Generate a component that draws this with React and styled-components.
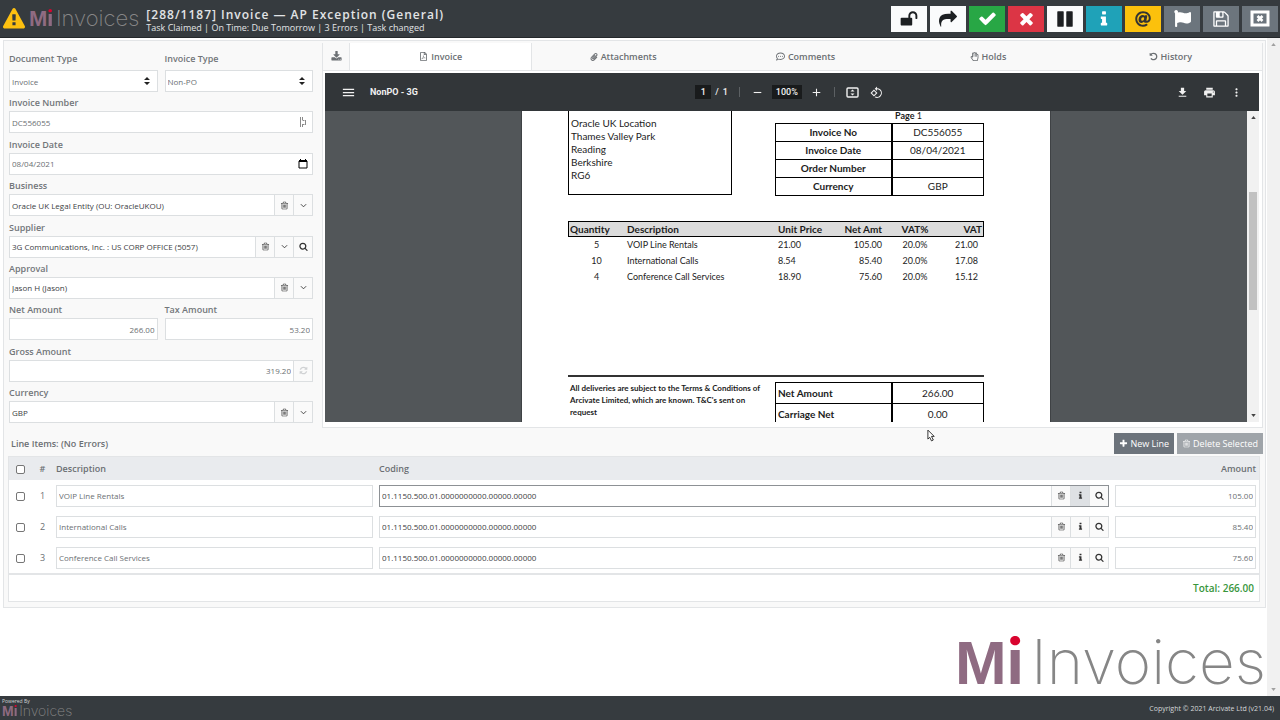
import styled, { createGlobalStyle, css } from "styled-components";
import { FaAt, FaPaperclip, FaRegFilePdf, FaRegHandPaper, FaRegCommentDots, FaFlag } from "react-icons/fa";
import { MdMenu, MdRemove, MdAdd, MdFileDownload, MdPrint, MdMoreVert, MdRotate90DegreesCcw } from "react-icons/md";

const icons = {
  unlock: "M1728 576v256q0 26-19 45t-45 19h-64q-26 0-45-19t-19-45v-256q0-106-75-181t-181-75-181 75-75 181v192h96q40 0 68 28t28 68v576q0 40-28 68t-68 28h-960q-40 0-68-28t-28-68v-576q0-40 28-68t68-28h672v-192q0-185 131.500-316.500t316.500-131.500 316.500 131.500 131.500 316.500z",
  share: "M1792 640q0 26-19 45l-512 512q-19 19-45 19t-45-19-19-45v-256h-224q-98 0-175.500 6t-154 21.500-133 42.500-105.500 69.500-80 101-48.500 138.500-17.500 181q0 55 5 123 0 6 2.500 23.500t2.500 26.500q0 15-8.500 25t-23.500 10q-16 0-28-17-7-9-13-22t-13.500-30-10.500-24q-127-285-127-451 0-199 53-333 162-403 875-403h224v-256q0-26 19-45t45-19 45 19l512 512q19 19 19 45z",
  check: "M1671 566q0 40-28 68l-724 724-136 136q-28 28-68 28t-68-28l-136-136-362-362q-28-28-28-68t28-68l136-136q28-28 68-28t68 28l294 295 656-657q28-28 68-28t68 28l136 136q28 28 28 68z",
  times: "M1490 1322q0 40-28 68l-136 136q-28 28-68 28t-68-28l-294-294-294 294q-28 28-68 28t-68-28l-136-136q-28-28-28-68t28-68l294-294-294-294q-28-28-28-68t28-68l136-136q28-28 68-28t68 28l294 294 294-294q28-28 68-28t68 28l136 136q28 28 28 68t-28 68l-294 294 294 294q28 28 28 68z",
  pause: "M1664 192v1408q0 26-19 45t-45 19h-512q-26 0-45-19t-19-45v-1408q0-26 19-45t45-19h512q26 0 45 19t19 45zm-896 0v1408q0 26-19 45t-45 19h-512q-26 0-45-19t-19-45v-1408q0-26 19-45t45-19h512q26 0 45 19t19 45z",
  info: "M1216 1344v128q0 26-19 45t-45 19h-512q-26 0-45-19t-19-45v-128q0-26 19-45t45-19h64v-384h-64q-26 0-45-19t-19-45v-128q0-26 19-45t45-19h384q26 0 45 19t19 45v576h64q26 0 45 19t19 45zm-128-1152v192q0 26-19 45t-45 19h-256q-26 0-45-19t-19-45v-192q0-26 19-45t45-19h256q26 0 45 19t19 45z",
  save: "M512 1536h768v-384h-768v384zm896 0h128v-896q0-14-10-38.500t-20-34.500l-281-281q-10-10-34-20t-39-10v416q0 40-28 68t-68 28h-576q-40 0-68-28t-28-68v-416h-128v1280h128v-416q0-40 28-68t68-28h832q40 0 68 28t28 68v416zm-384-928v-320q0-13-9.500-22.500t-22.500-9.500h-192q-13 0-22.500 9.500t-9.500 22.500v320q0 13 9.500 22.500t22.500 9.500h192q13 0 22.500-9.500t9.500-22.500zm640 32v928q0 40-28 68t-68 28h-1344q-40 0-68-28t-28-68v-1344q0-40 28-68t68-28h928q40 0 88 20t76 48l280 280q28 28 48 76t20 88z",
  warning: "M1024 1375v-190q0-14-9.500-23.500t-22.500-9.500h-192q-13 0-22.500 9.500t-9.500 23.500v190q0 14 9.500 23.500t22.500 9.500h192q13 0 22.500-9.500t9.500-23.500zm-2-374l18-459q0-12-10-19-13-11-24-11h-220q-11 0-24 11-10 7-10 21l17 457q0 10 10 16.500t24 6.500h185q14 0 23.500-6.500t10.500-16.500zm-14-934l768 1408q35 63-2 126-17 29-46.500 46t-63.500 17h-1536q-34 0-63.500-17t-46.500-46q-37-63-2-126l768-1408q17-31 47-49t65-18 65 18 47 49z",
  trash: "M704 736v576q0 14-9 23t-23 9h-64q-14 0-23-9t-9-23v-576q0-14 9-23t23-9h64q14 0 23 9t9 23zm256 0v576q0 14-9 23t-23 9h-64q-14 0-23-9t-9-23v-576q0-14 9-23t23-9h64q14 0 23 9t9 23zm256 0v576q0 14-9 23t-23 9h-64q-14 0-23-9t-9-23v-576q0-14 9-23t23-9h64q14 0 23 9t9 23zm128 724v-948h-896v948q0 22 7 40.500t14.500 27 10.500 8.500h832q3 0 10.500-8.500t14.500-27 7-40.500zm-672-1076h448l-48-117q-7-9-17-11h-317q-10 2-17 11zm928 32v64q0 14-9 23t-23 9h-96v948q0 83-47 143.500t-113 60.500h-832q-66 0-113-58.500t-47-141.500v-952h-96q-14 0-23-9t-9-23v-64q0-14 9-23t23-9h309l70-167q15-37 54-63t79-26h320q40 0 79 26t54 63l70 167h309q14 0 23 9t9 23z",
  search: "M1216 832q0-185-131.500-316.500t-316.500-131.500-316.500 131.500-131.500 316.500 131.500 316.500 316.500 131.500 316.500-131.500 131.500-316.500zm512 832q0 52-38 90t-90 38q-54 0-90-38l-343-342q-179 124-399 124-143 0-273.500-55.500t-225-150-150-225-55.500-273.500 55.500-273.500 150-225 225-150 273.500-55.500 273.500 55.500 225 150 150 225 55.500 273.500q0 220-124 399l343 343q37 37 37 90z",
  plus: "M1600 736v192q0 40-28 68t-68 28h-416v416q0 40-28 68t-68 28h-192q-40 0-68-28t-28-68v-416h-416q-40 0-68-28t-28-68v-192q0-40 28-68t68-28h416v-416q0-40 28-68t68-28h192q40 0 68 28t28 68v416h416q40 0 68 28t28 68z",
  download: "M1344 1344q0-26-19-45t-45-19-45 19-19 45 19 45 45 19 45-19 19-45zm256 0q0-26-19-45t-45-19-45 19-19 45 19 45 45 19 45-19 19-45zm128-224v320q0 40-28 68t-68 28h-1472q-40 0-68-28t-28-68v-320q0-40 28-68t68-28h465l135 136q58 56 136 56t136-56l136-136h464q40 0 68 28t28 68zm-325-569q17 41-14 70l-448 448q-18 19-45 19t-45-19l-448-448q-31-29-14-70 17-39 59-39h256v-448q0-26 19-45t45-19h256q26 0 45 19t19 45v448h256q42 0 59 39z",
  refresh: "M1639 1056q0 5-1 7-64 268-268 434.500t-478 166.500q-146 0-282.500-55t-243.500-157l-129 129q-19 19-45 19t-45-19-19-45v-448q0-26 19-45t45-19h448q26 0 45 19t19 45-19 45l-137 137q71 66 161 102t187 36q134 0 250-65t186-179q11-17 53-117 8-23 30-23h192q13 0 22.500 9.500t9.500 22.500zm25-800v448q0 26-19 45t-45 19h-448q-26 0-45-19t-19-45 19-45l138-138q-148-137-349-137-134 0-250 65t-186 179q-11 17-53 117-8 23-30 23h-199q-13 0-22.500-9.500t-9.500-22.500v-7q65-268 270-434.500t480-166.500q146 0 284 55.500t245 156.500l130-129q19-19 45-19t45 19 19 45z",
  history: "M1664 896q0 156-61 298t-164 245-245 164-298 61q-172 0-327-72.500t-264-204.500q-7-10-6.500-22.500t8.500-20.500l137-138q10-9 25-9 16 2 23 12 73 95 179 147t225 52q104 0 198.500-40.500t163.500-109.500 109.500-163.500 40.500-198.500-40.500-198.500-109.500-163.500-163.500-109.500-198.500-40.500q-98 0-188 35.500t-160 101.500l137 138q31 30 14 69-17 40-59 40h-448q-26 0-45-19t-19-45v-448q0-42 40-59 39-17 69 14l130 129q107-101 244.500-156.500t284.500-55.500q156 0 298 61t245 164 164 245 61 298z",
};

const Fa = ({ name, size = 10 }) => (
  <svg width={size} height={size} viewBox="0 0 1792 1792" fill="currentColor" aria-hidden="true">
    <path d={icons[name]} />
  </svg>
);

const Chevron = () => (
  <svg width="7" height="7" viewBox="0 0 8 8" fill="none" stroke="currentColor" aria-hidden="true">
    <path d="M1 2.500l3 3 3-3" />
  </svg>
);

const WindowClose = () => (
  <svg width="20" height="18" viewBox="0 0 20 18" aria-hidden="true">
    <rect x="2" y="2" width="16" height="13" fill="none" stroke="currentColor" strokeWidth="3" />
    <path d="M7.500 6l5 5M12.500 6l-5 5" stroke="currentColor" strokeWidth="2.600" />
  </svg>
);

const FitPage = () => (
  <svg width="13" height="11" viewBox="0 0 13 11" aria-hidden="true">
    <rect x="1" y="1" width="11" height="9" rx="1" fill="none" stroke="currentColor" strokeWidth="1.400" />
    <path d="M6.500 2.500l2 2h-4zM6.500 8.500l2-2h-4z" fill="currentColor" />
  </svg>
);

const Calendar = () => (
  <svg width="10" height="10" viewBox="0 0 10 10" aria-hidden="true">
    <path d="M1 2h8v7H1z" fill="none" stroke="#000" />
    <path d="M1 1h8v2H1zM2 0h1v1H2zM7 0h1v1H7z" fill="#000" />
  </svg>
);

const Scan = () => (
  <svg width="8" height="10" viewBox="0 0 8 10" fill="none" stroke="#8a8a8a" aria-hidden="true">
    <path d="M1.500 0v10M3.500 0v3M3.500 7v3M3.500 3.500h2M3.500 7.500h2M6.500 3v5" />
  </svg>
);

const Brand = ({ size }) => (
  <Wordmark $size={size}>
    <b>M<i>i</i></b><span>Invoices</span>
  </Wordmark>
);

const actions = [
  { label: "Unlock", tone: "light", icon: <Fa name="unlock" size={18} /> },
  { label: "Forward", tone: "light", icon: <Fa name="share" size={18} /> },
  { label: "Approve", tone: "green", icon: <Fa name="check" size={19} /> },
  { label: "Reject", tone: "red", icon: <Fa name="times" size={19} /> },
  { label: "Pause", tone: "light", icon: <Fa name="pause" size={18} /> },
  { label: "Information", tone: "teal", icon: <Fa name="info" size={18} /> },
  { label: "Email", tone: "yellow", icon: <FaAt size={16} /> },
  { label: "Flag", tone: "grey", icon: <FaFlag size={17} /> },
  { label: "Save", tone: "grey", icon: <Fa name="save" size={18} /> },
  { label: "Close", tone: "grey", icon: <WindowClose /> },
];

const tabs = [
  { name: "Invoice", icon: <FaRegFilePdf size={9} />, active: true },
  { name: "Attachments", icon: <FaPaperclip size={8} /> },
  { name: "Comments", icon: <FaRegCommentDots size={9} /> },
  { name: "Holds", icon: <FaRegHandPaper size={9} /> },
  { name: "History", icon: <Fa name="history" size={9} /> },
];

const lines = [
  { qty: "5", description: "VOIP Line Rentals", price: "21.00", net: "105.00", vat: "21.00", focus: true },
  { qty: "10", description: "International Calls", price: "8.54", net: "85.40", vat: "17.08" },
  { qty: "4", description: "Conference Call Services", price: "18.90", net: "75.60", vat: "15.12" },
];

const coding = "01.1150.500.01.0000000000.00000.00000";

const SelectField = ({ id, label, value }) => (
  <Field>
    <label htmlFor={id}>{label}</label>
    <SelectBox>
      <select id={id} defaultValue={value}>
        <option>{value}</option>
      </select>
      <svg width="6" height="8" viewBox="0 0 6 8" aria-hidden="true">
        <path d="M3 0l3 3H0zM3 8l3-3H0z" fill="#222" />
      </svg>
    </SelectBox>
  </Field>
);

const TextField = ({ id, label, value, right, dark, children }) => (
  <Field>
    <label htmlFor={id}>{label}</label>
    <Group $right={right} $dark={dark}>
      <input id={id} defaultValue={value} />
      {children}
    </Group>
  </Field>
);

const Lookup = ({ search, ...props }) => (
  <TextField dark {...props}>
    <AddOn aria-label={`Clear ${props.label}`}><Fa name="trash" size={9} /></AddOn>
    <AddOn aria-label={`Choose ${props.label}`}><Chevron /></AddOn>
    {search && <AddOn aria-label={`Search ${props.label}`}><Fa name="search" size={9} /></AddOn>}
  </TextField>
);

const InvoiceForm = () => (
  <Form>
    <Pair>
      <SelectField id="doc-type" label="Document Type" value="Invoice" />
      <SelectField id="inv-type" label="Invoice Type" value="Non-PO" />
    </Pair>
    <TextField id="inv-no" label="Invoice Number" value="DC556055">
      <Inner><Scan /></Inner>
    </TextField>
    <TextField id="inv-date" label="Invoice Date" value="08/04/2021">
      <Inner as="button" type="button" aria-label="Pick a date"><Calendar /></Inner>
    </TextField>
    <Lookup id="business" label="Business" value="Oracle UK Legal Entity (OU: OracleUKOU)" />
    <Lookup id="supplier" label="Supplier" value="3G Communications, Inc. : US CORP OFFICE (5057)" search />
    <Lookup id="approval" label="Approval" value="Jason H (Jason)" />
    <Pair>
      <TextField id="net" label="Net Amount" value="266.00" right />
      <TextField id="tax" label="Tax Amount" value="53.20" right />
    </Pair>
    <TextField id="gross" label="Gross Amount" value="319.20" right>
      <AddOn $faint aria-label="Recalculate"><Fa name="refresh" size={9} /></AddOn>
    </TextField>
    <Lookup id="currency" label="Currency" value="GBP" />
  </Form>
);

const PdfPage = () => (
  <Paper>
    <PaperTop>
      <Address>
        Oracle UK Location<br />Thames Valley Park<br />Reading<br />Berkshire<br />RG6
      </Address>
      <div>
        <PageNo><b>Page</b> 1</PageNo>
        <Boxed $row={18}>
          <tbody>
            <tr><th>Invoice No</th><td>DC556055</td></tr>
            <tr><th>Invoice Date</th><td>08/04/2021</td></tr>
            <tr><th>Order Number</th><td></td></tr>
            <tr><th>Currency</th><td>GBP</td></tr>
          </tbody>
        </Boxed>
      </div>
    </PaperTop>
    <PaperLines>
      <thead>
        <tr>
          <th>Quantity</th><th>Description</th><th>Unit Price</th><th>Net Amt</th><th>VAT%</th><th>VAT</th>
        </tr>
      </thead>
      <tbody>
        {lines.map(line => (
          <tr key={line.description}>
            <td>{line.qty}</td>
            <td>{line.description}</td>
            <td>{line.price}</td>
            <td>{line.net}</td>
            <td>20.0%</td>
            <td>{line.vat}</td>
          </tr>
        ))}
      </tbody>
    </PaperLines>
    <PaperBottom>
      <Terms>
        All deliveries are subject to the Terms &amp; Conditions of Arcivate Limited, which are known. T&amp;C's sent on request
      </Terms>
      <Boxed $row={21} $left>
        <tbody>
          <tr><th>Net Amount</th><td>266.00</td></tr>
          <tr><th>Carriage Net</th><td>0.00</td></tr>
        </tbody>
      </Boxed>
    </PaperBottom>
  </Paper>
);

const Viewer = () => (
  <ViewerFrame>
    <PdfBar>
      <PdfSide>
        <PdfButton aria-label="Menu"><MdMenu size={15} /></PdfButton>
        <strong>NonPO - 3G</strong>
      </PdfSide>
      <PdfCenter>
        <PageCount>
          <input aria-label="Page" defaultValue="1" />
          <span>/</span>
          <span>1</span>
        </PageCount>
        <hr />
        <PdfButton aria-label="Zoom out"><MdRemove size={13} /></PdfButton>
        <input className="zoom" aria-label="Zoom" defaultValue="100%" />
        <PdfButton aria-label="Zoom in"><MdAdd size={13} /></PdfButton>
        <hr />
        <PdfButton aria-label="Fit to page"><FitPage /></PdfButton>
        <PdfButton aria-label="Rotate"><MdRotate90DegreesCcw size={13} /></PdfButton>
      </PdfCenter>
      <PdfSide $end>
        <PdfButton aria-label="Download"><MdFileDownload size={13} /></PdfButton>
        <PdfButton aria-label="Print"><MdPrint size={13} /></PdfButton>
        <PdfButton aria-label="More"><MdMoreVert size={13} /></PdfButton>
      </PdfSide>
    </PdfBar>
    <PdfCanvas>
      <PdfDesk><PdfPage /></PdfDesk>
      <Scroller $thumb />
    </PdfCanvas>
  </ViewerFrame>
);

const LineItems = () => (
  <section>
    <LinesHead>
      <h2>Line Items: (No Errors)</h2>
      <SmallButton><Fa name="plus" size={9} /> New Line</SmallButton>
      <SmallButton $muted><Fa name="trash" size={9} /> Delete Selected</SmallButton>
    </LinesHead>
    <Lines>
      <colgroup>
        <col className="check" /><col className="number" /><col className="description" /><col /><col className="amount" />
      </colgroup>
      <thead>
        <tr>
          <th><Tick type="checkbox" aria-label="Select all lines" /></th>
          <th>#</th>
          <th>Description</th>
          <th>Coding</th>
          <th>Amount</th>
        </tr>
      </thead>
      <tbody>
        {lines.map((line, i) => (
          <tr key={line.description}>
            <td><Tick type="checkbox" aria-label={`Select line ${i + 1}`} /></td>
            <td>{i + 1}</td>
            <td><Group><input aria-label="Description" defaultValue={line.description} /></Group></td>
            <td>
              <Group $dark $focus={line.focus}>
                <input aria-label="Coding" defaultValue={coding} />
                <AddOn aria-label="Clear coding"><Fa name="trash" size={9} /></AddOn>
                <AddOn $on={line.focus} aria-label="Coding information"><Fa name="info" size={9} /></AddOn>
                <AddOn aria-label="Search coding"><Fa name="search" size={9} /></AddOn>
              </Group>
            </td>
            <td><Group $right><input aria-label="Amount" defaultValue={line.net} /></Group></td>
          </tr>
        ))}
      </tbody>
      <tfoot>
        <tr><td colSpan="5">Total: 266.00</td></tr>
      </tfoot>
    </Lines>
  </section>
);

const Scroller = ({ $thumb }) => (
  <Track $thumb={$thumb}>
    <svg width="5" height="3" viewBox="0 0 6 4"><path d="M3 0l3 4H0z" fill="currentColor" /></svg>
    {$thumb && <i />}
    <svg width="5" height="3" viewBox="0 0 6 4"><path d="M3 4l3-4H0z" fill="currentColor" /></svg>
  </Track>
);

const App = () => (
  <>
    <GlobalStyle />
    <Page>
      <Header>
        <Warn><Fa name="warning" size={22} /></Warn>
        <Brand size={22} />
        <Heading>
          <h1>[288/1187] Invoice — AP Exception (General)</h1>
          <p>Task Claimed | On Time: Due Tomorrow | 3 Errors | Task changed</p>
        </Heading>
        <Actions>
          {actions.map(action => (
            <Action key={action.label} $tone={action.tone} aria-label={action.label}>{action.icon}</Action>
          ))}
        </Actions>
      </Header>
      <Body>
        <Main>
          <Panel>
            <Columns>
              <InvoiceForm />
              <Preview>
                <Tabs>
                  <DownloadTab aria-label="Download"><Fa name="download" size={11} /></DownloadTab>
                  {tabs.map(tab => (
                    <Tab key={tab.name} $active={tab.active}>{tab.icon} {tab.name}</Tab>
                  ))}
                </Tabs>
                <Viewer />
              </Preview>
            </Columns>
            <LineItems />
          </Panel>
          <BigLogo><Brand size={62} /></BigLogo>
        </Main>
        <Scroller />
      </Body>
      <Footer>
        <div>
          <small>Powered By</small>
          <Brand size={14} />
        </div>
        <p>Copyright © 2021 Arcivate Ltd (v21.04)</p>
      </Footer>
      <Pointer viewBox="0 0 10 14" aria-hidden="true">
        <path d="M1 1v10l2-2 2 4 2-1-2-4h3z" fill="#fff" stroke="#222" />
      </Pointer>
    </Page>
  </>
);

export default App;

const tones = {
  light: ["#fafbfc", "#1c1f22"],
  green: ["#28a745", "#fff"],
  red: ["#dc3545", "#fff"],
  teal: ["#1fa2b8", "#fff"],
  yellow: ["#fcc10c", "#333"],
  grey: ["#6c757d", "#fff"],
};

const GlobalStyle = createGlobalStyle`
  *{
    box-sizing: border-box;
  }
  body{
    margin: 0;
    background-color: #fff;
    color: #6b6f73;
    font-family: "Open Sans", "Noto Sans", sans-serif;
    font-size: 9px;
  }
  h1, h2, p{
    margin: 0;
  }
  button, input, select{
    font: inherit;
    color: inherit;
    margin: 0;
  }
  button{
    padding: 0;
    border: none;
    background: none;
    cursor: pointer;
  }
  svg{
    flex: none;
  }
`;

const Page = styled.div`
  min-height: 100vh;
  display: flex;
  flex-direction: column;
`;

const Header = styled.header`
  height: 38px;
  display: flex;
  align-items: center;
  padding: 0 2px 0 3px;
  background-color: #363b3f;
  border-bottom: 1px solid #24282b;
  color: #e2e4e6;
`;

const Warn = styled.span`
  display: flex;
  margin-right: 4px;
  color: #fdc010;
`;

const Wordmark = styled.span`
  font-family: Inter, sans-serif;
  font-size: ${({ $size }) => $size}px;
  line-height: 1;
  font-weight: 200;
  color: #868686;
  white-space: nowrap;
  b{
    margin-right: 0.12em;
    font-family: "Liberation Sans", sans-serif;
    font-weight: 700;
    color: #8f6b82;
  }
  /* red dot over a plum stem */
  i{
    font-family: Inter, sans-serif;
    font-style: normal;
    color: transparent;
    background: linear-gradient(#d9042f 33%, #8f6b82 33%);
    background-clip: text;
  }
`;

const Heading = styled.div`
  flex: 1;
  margin-left: 7px;
  padding-top: 4px;
  h1{
    font-size: 12px;
    line-height: 14px;
    font-weight: 600;
    letter-spacing: 1px;
  }
  p{
    font-size: 9px;
    line-height: 12px;
    font-weight: 500;
  }
`;

const Actions = styled.div`
  display: flex;
  gap: 3px;
`;

const Action = styled.button`
  width: 36px;
  height: 26px;
  display: flex;
  align-items: center;
  justify-content: center;
  background-color: ${({ $tone }) => tones[$tone][0]};
  color: ${({ $tone }) => tones[$tone][1]};
`;

const Body = styled.div`
  flex: 1;
  display: flex;
`;

const Main = styled.main`
  flex: 1;
  min-width: 0;
  display: flex;
  flex-direction: column;
  padding: 2px 1px 0 3px;
`;

const Track = styled.div`
  width: ${({ $thumb }) => ($thumb ? 12 : 13)}px;
  display: flex;
  flex-direction: column;
  align-items: center;
  justify-content: space-between;
  padding: 5px 0;
  background-color: #f1f1f1;
  color: ${({ $thumb }) => ($thumb ? "#444" : "#a0a0a0")};
  i{
    width: 8px;
    height: 118px;
    margin-bottom: 32px;
    background-color: #c1c1c1;
  }
`;

const Panel = styled.div`
  padding: 2px 2px 5px 4px;
  background-color: #f9f9f9;
  border: 1px solid #e3e5e7;
`;

const Columns = styled.div`
  display: flex;
`;

const Form = styled.form`
  flex: 0 0 304px;
  display: flex;
  flex-direction: column;
  justify-content: space-between;
  margin: 5px 9px 5px 1px;
`;

const Pair = styled.div`
  display: grid;
  grid-template-columns: 1fr 1fr;
  gap: 7px;
`;

const Field = styled.div`
  label{
    display: block;
    line-height: 17px;
    font-weight: 600;
    color: #727679;
  }
  ${Pair}:first-child & label{
    line-height: 22px;
  }
`;

const inputText = css`
  width: 100%;
  min-width: 0;
  height: 100%;
  padding: 0 2px;
  border: none;
  outline: none;
  background-color: transparent;
  font-size: 8px;
`;

const SelectBox = styled.div`
  position: relative;
  height: 22px;
  background-color: #fff;
  border: 1px solid #dcdfe1;
  select{
    ${inputText}
    appearance: none;
  }
  svg{
    position: absolute;
    top: 6px;
    right: 7px;
    pointer-events: none;
  }
`;

const Group = styled.div`
  height: 22px;
  display: flex;
  align-items: stretch;
  background-color: #fff;
  border: 1px solid ${({ $focus }) => ($focus ? "#8d9195" : "#dcdfe1")};
  color: ${({ $dark }) => ($dark ? "#3c4043" : "#6b6f73")};
  input{
    ${inputText}
    text-align: ${({ $right }) => ($right ? "right" : "left")};
  }
`;

const AddOn = styled.button.attrs({ type: "button" })`
  flex: 0 0 19px;
  display: flex;
  align-items: center;
  justify-content: center;
  border-left: 1px solid #dcdfe1;
  background-color: ${({ $on }) => ($on ? "#dee1e4" : "#fafafa")};
  color: ${({ $faint }) => ($faint ? "#d0d2d4" : "#333")};
`;

const Inner = styled.span`
  flex: 0 0 19px;
  display: flex;
  align-items: center;
  justify-content: center;
`;

const Preview = styled.div`
  flex: 1;
  min-width: 0;
  border: 1px solid #e3e5e7;
  border-top: none;
  background-color: #fff;
`;

const Tabs = styled.div`
  height: 28px;
  display: flex;
  background-color: #f9f9f9;
  border-bottom: 1px solid #e3e5e7;
`;

const Tab = styled.button`
  flex: 1;
  display: flex;
  align-items: center;
  justify-content: center;
  gap: 3px;
  font-weight: 600;
  background-color: ${({ $active }) => ($active ? "#fff" : "transparent")};
  border-right: 1px solid ${({ $active }) => ($active ? "#e3e5e7" : "transparent")};
`;

const DownloadTab = styled.button`
  width: 27px;
  display: flex;
  align-items: center;
  justify-content: center;
  border-right: 1px solid #e3e5e7;
`;

const ViewerFrame = styled.div`
  margin: 2px 3px 5px 2px;
`;

const PdfBar = styled.div`
  height: 38px;
  display: flex;
  align-items: center;
  padding: 0 16px;
  background-color: #323639;
  color: #f1f1f1;
  font-family: Roboto, sans-serif;
  font-size: 9px;
  font-weight: 500;
`;

const PdfSide = styled.div`
  flex: 1;
  display: flex;
  align-items: center;
  justify-content: ${({ $end }) => ($end ? "flex-end" : "flex-start")};
  gap: 14px;
`;

const PdfCenter = styled.div`
  display: flex;
  align-items: center;
  gap: 8px;
  padding-right: 6px;
  input{
    width: 16px;
    height: 14px;
    padding: 0;
    border: none;
    text-align: center;
    background-color: #191b1c;
  }
  .zoom{
    width: 30px;
  }
  hr{
    width: 1px;
    height: 10px;
    margin: 0 3px;
    border: none;
    background-color: #5c6063;
  }
  button + button{
    margin-left: 3px;
  }
`;

const PageCount = styled.div`
  display: flex;
  align-items: center;
  gap: 4px;
`;

const PdfButton = styled.button`
  display: flex;
`;

const PdfCanvas = styled.div`
  height: 311px;
  display: flex;
  overflow: hidden;
`;

const PdfDesk = styled.div`
  flex: 1;
  display: flex;
  justify-content: center;
  background-color: #525659;
`;

const Paper = styled.div`
  width: 530px;
  padding: 0 66px 0 46px;
  background-color: #fff;
  color: #1c1c1c;
  font-family: Lato, sans-serif;
  font-size: 10px;
  border: solid #3f4245;
  border-width: 0 1px;
`;

const PaperTop = styled.div`
  display: flex;
  justify-content: space-between;
  height: 84px;
`;

const Address = styled.div`
  width: 164px;
  padding: 6px 2px;
  line-height: 13px;
  border: 1px solid #000;
  border-top: none;
`;

const PageNo = styled.div`
  height: 12px;
  line-height: 10px;
  padding-left: 58px;
  font-size: 9px;
  text-align: center;
`;

const Boxed = styled.table`
  width: 209px;
  border-collapse: collapse;
  table-layout: fixed;
  th, td{
    height: ${({ $row }) => $row}px;
    padding: 0 2px 1px;
    line-height: 12px;
    border: 1px solid #000;
    text-align: center;
  }
  th{
    width: 116px;
    border-right-width: 2px;
    text-align: ${({ $left }) => ($left ? "left" : "center")};
  }
`;

const PaperLines = styled.table`
  width: 100%;
  height: 63px;
  margin-top: 26px;
  border-collapse: collapse;
  table-layout: fixed;
  font-size: 9px;
  thead{
    background-color: #dcdcdc;
    outline: 1px solid #000;
    outline-offset: -1px;
    font-size: 10px;
  }
  th, td{
    height: 16px;
    padding: 0 2px 1px;
    line-height: 12px;
    text-align: left;
    white-space: nowrap;
  }
  th:nth-child(1){
    width: 57px;
  }
  td:nth-child(1){
    text-align: center;
  }
  th:nth-child(2){
    width: 151px;
  }
  th:nth-child(3){
    width: 58px;
  }
  th:nth-child(4){
    width: 50px;
  }
  th:nth-child(4), td:nth-child(4), th:nth-child(6), td:nth-child(6){
    text-align: right;
  }
  th:nth-child(5), td:nth-child(5){
    width: 62px;
    text-align: center;
  }
  td:nth-child(6){
    padding-right: 6px;
  }
`;

const PaperBottom = styled.div`
  display: flex;
  justify-content: space-between;
  margin-top: 90px;
  padding-top: 5px;
  border-top: 2px solid #333;
`;

const Terms = styled.p`
  width: 198px;
  padding-left: 2px;
  font-size: 8px;
  line-height: 12px;
  font-weight: 700;
`;

const LinesHead = styled.div`
  display: flex;
  align-items: center;
  gap: 3px;
  padding-top: 5px;
  h2{
    flex: 1;
    padding-left: 3px;
    font-size: 9px;
    font-weight: 600;
  }
`;

const SmallButton = styled.button`
  height: 21px;
  display: flex;
  align-items: center;
  gap: 2px;
  padding: 0 5px;
  color: #fff;
  background-color: ${({ $muted }) => ($muted ? "#9fa4a9" : "#6c737b")};
`;

const Lines = styled.table`
  width: calc(100% - 3px);
  margin-top: 2px;
  border: 1px solid #e3e5e7;
  border-spacing: 0;
  table-layout: fixed;
  background-color: #fff;
  .check{
    width: 23px;
  }
  .number{
    width: 21px;
  }
  .description{
    width: 323px;
  }
  .amount{
    width: 147px;
  }
  th, td{
    height: 31px;
    padding: 0 3px;
    text-align: left;
  }
  th{
    height: 23px;
    font-weight: 600;
    background-color: #e9ebee;
  }
  th:nth-child(-n+2), td:nth-child(-n+2){
    padding: 0;
    text-align: center;
  }
  th:last-child{
    text-align: right;
  }
  tfoot td:only-child{
    height: 28px;
    padding: 0 5px;
    border-top: 2px solid #e3e5e7;
    font-size: 10px;
    font-weight: 600;
    text-align: right;
    color: #38963c;
  }
`;

const Tick = styled.input`
  appearance: none;
  width: 9px;
  height: 9px;
  border: 1px solid #767676;
  border-radius: 2px;
  background-color: #fff;
  vertical-align: middle;
`;

const BigLogo = styled.div`
  flex: 1;
  display: flex;
  align-items: flex-end;
  justify-content: flex-end;
  padding-bottom: 2px;
`;

const Footer = styled.footer`
  height: 24px;
  display: flex;
  justify-content: space-between;
  align-items: center;
  padding: 0 6px 0 2px;
  background-color: #363b3f;
  color: #d5d7d9;
  font-size: 7px;
  div{
    display: flex;
    flex-direction: column;
  }
  small{
    font-size: 5px;
    line-height: 6px;
  }
`;

const Pointer = styled.svg`
  position: absolute;
  top: 429px;
  left: 927px;
  width: 9px;
  height: 13px;
`;
